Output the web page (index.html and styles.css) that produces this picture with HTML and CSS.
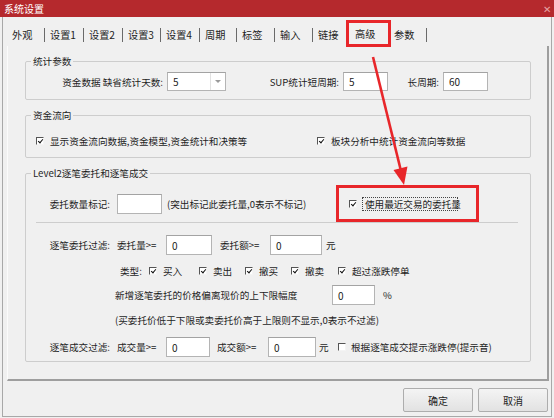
FILE: index.html
```html
<!DOCTYPE html>
<html lang="zh-CN">
<head>
<meta charset="utf-8">
<title>系统设置</title>
<link rel="stylesheet" href="styles.css">
</head>
<body>
<div class="window">
  <div class="titlebar"><span class="title">系统设置</span><span class="close">✕</span></div>

  <div class="tabs">
    <span class="tab tab-w37 first">外观</span>
    <span class="tab tab-w39">设置1</span>
    <span class="tab tab-w39">设置2</span>
    <span class="tab tab-w38">设置3</span>
    <span class="tab tab-w39">设置4</span>
    <span class="tab tab-w37">周期</span>
    <span class="tab tab-w38">标签</span>
    <span class="tab tab-w38">输入</span>
    <span class="tab tab-w38">链接</span>
    <span class="tab tab-w39 active">高级</span>
    <span class="tab tab-w37 last">参数</span>
  </div>

  <div class="panel">
    <fieldset class="group g-stat">
      <legend>统计参数</legend>
      <div class="row row-20">
        <span class="lbl lbl-days">资金数据 缺省统计天数:</span>
        <span class="field combo">5<span class="drop"><span class="tri"></span></span></span>
        <span class="lbl lbl-sup">SUP统计短周期:</span>
        <span class="field w45">5</span>
        <span class="lbl lbl-long">长周期:</span>
        <span class="field w45">60</span>
      </div>
    </fieldset>

    <fieldset class="group g-flow">
      <legend>资金流向</legend>
      <div class="row row-14 pad-cb">
        <span class="opt opt-flow1"><span class="cb on"></span><span class="opt-text">显示资金流向数据,资金模型,资金统计和决策等</span></span>
        <span class="opt"><span class="cb on"></span><span class="opt-text">板块分析中统计资金流向等数据</span></span>
      </div>
    </fieldset>

    <fieldset class="group g-level2">
      <legend>Level2逐笔委托和逐笔成交</legend>
      <div class="row row-20">
        <span class="lbl lbl-row">委托数量标记:</span>
        <span class="field w45 ml7"></span>
        <span class="note">(突出标记此委托量,0表示不标记)</span>
        <span class="opt"><span class="cb on"></span><span class="focus-text">使用最近交易的委托量</span></span>
      </div>
      <div class="sep"></div>
      <div class="row row-20 mt12">
        <span class="lbl lbl-row">逐笔委托过滤:</span>
        <span class="lbl lbl-vol ml7">委托量>=</span>
        <span class="field w46">0</span>
        <span class="lbl lbl-amt ml8">委托额>=</span>
        <span class="field w52">0</span>
        <span class="unit ml4">元</span>
      </div>
      <div class="row row-14 mt9 pad-type">
        <span class="lbl lbl-type">类型:</span>
        <span class="opt w50"><span class="cb on"></span><span class="opt-text">买入</span></span>
        <span class="opt w46"><span class="cb on"></span><span class="opt-text">卖出</span></span>
        <span class="opt w46"><span class="cb on"></span><span class="opt-text">撤买</span></span>
        <span class="opt w47"><span class="cb on"></span><span class="opt-text">撤卖</span></span>
        <span class="opt"><span class="cb on"></span><span class="opt-text">超过涨跌停单</span></span>
      </div>
      <div class="row row-20 mt7 pad-text">
        <span class="lbl lbl-range">新增逐笔委托的价格偏离现价的上下限幅度</span>
        <span class="field w43">0</span>
        <span class="unit ml8">%</span>
      </div>
      <div class="row row-14 mt8 pad-text">
        <span class="lbl">(买委托价低于下限或卖委托价高于上限则不显示,0表示不过滤)</span>
      </div>
      <div class="row row-20 mt10">
        <span class="lbl lbl-row">逐笔成交过滤:</span>
        <span class="lbl lbl-vol ml7">成交量>=</span>
        <span class="field w44">0</span>
        <span class="lbl lbl-amt2 ml7">成交额>=</span>
        <span class="field w48">0</span>
        <span class="unit unit-yuan ml3">元</span>
        <span class="opt"><span class="cb"></span><span class="opt-text">根据逐笔成交提示涨跌停(提示音)</span></span>
      </div>
    </fieldset>
  </div>

  <div class="footer">
    <button class="btn">确定</button>
    <button class="btn">取消</button>
  </div>

  <div class="frame"></div>
  <div class="mark mark-tab"></div>
  <div class="mark mark-opt"></div>
  <svg class="arrow" width="554" height="418" viewBox="0 0 554 418">
    <line x1="373" y1="57" x2="400.5" y2="169" stroke="#e8262a" stroke-width="2.6"/>
    <polygon points="404,185 407.5,166.5 393.5,170" fill="#e8262a"/>
  </svg>
</div>
</body>
</html>
```

FILE: styles.css
```css
* { box-sizing: border-box; }

body {
  margin: 0;
  background: #f0f0f0;
}

.window {
  position: relative;
  width: 554px;
  height: 418px;
  overflow: hidden;
  background: #f0f0f0;
  color: #1e1e1e;
  font-family: "Noto Sans CJK SC", "Microsoft YaHei", "Noto Sans", sans-serif;
  font-size: 9.6px;
}

/* title bar */
.titlebar {
  height: 17px;
  background: #b5292d;
  color: #fff;
  display: flex;
  align-items: center;
  justify-content: space-between;
  padding: 0 3px 0 4px;
}
.title { font-size: 10px; line-height: 17px; }
.close { font-size: 10px; color: #e6a3a4; line-height: 17px; }

/* tabs */
.tabs {
  display: flex;
  margin-top: 11px;
  padding-left: 7px;
  height: 14px;
}
.tab {
  height: 14px;
  line-height: 14px;
  font-size: 10.2px;
  padding-left: 5px;
  border-left: 1px solid #6a6a6a;
  white-space: nowrap;
}
.tab.first { border-left: none; }
.tab.active { border-left: none; line-height: 12px; }
.tab.last { border-left: none; border-right: 1px solid #6a6a6a; padding-left: 5px; }
.tab-w37 { width: 37px; }
.tab-w38 { width: 38px; }
.tab-w39 { width: 39px; }
.tab.last.tab-w37 { width: 38px; }

/* tab page */
.panel {
  margin: 4px 0 0 7px;
  width: 542px;
  padding: 9px 0 17px 17px;
  border-left: 1px solid #fbfbfb;
  border-right: 2px solid #9e9e9e;
  border-bottom: 2px solid #9e9e9e;
}

.group {
  margin: 0;
  width: 506px;
  min-inline-size: 0;
  border: 1px solid #cdcdcd;
  border-radius: 2px;
  padding: 0;
}
.group legend {
  margin-left: 5px;
  padding: 0 2px;
  line-height: 12px;
  height: 12px;
  font-size: 9.6px;
}
.g-stat { padding: 5px 0 8px 0; }
.g-flow { margin-top: 9px; padding: 13px 0 9px 0; }
.g-level2 { margin-top: 9px; padding: 15px 0 4px 0; }

.row {
  display: flex;
  align-items: center;
  white-space: nowrap;
}
.row-20 { height: 20px; }
.row-14 { height: 14px; }
.g-stat .row-20 { height: 19px; }

.lbl { line-height: 14px; }
.lbl-days { width: 137px; text-align: right; margin-right: 4px; }
.lbl-sup { width: 113px; text-align: right; margin-right: 4px; }
.lbl-long { width: 51px; text-align: right; margin-right: 4px; }
.lbl-row { width: 84px; text-align: right; }
.lbl-vol { width: 49px; }
.lbl-amt { width: 50px; }
.lbl-amt2 { width: 51px; }
.lbl-type { width: 29px; }
.lbl-range { width: 217px; }

.pad-cb { padding-left: 10px; }
.pad-type { padding-left: 94px; }
.pad-text { padding-left: 89px; }

.ml3 { margin-left: 3px; }
.ml4 { margin-left: 4px; }
.ml7 { margin-left: 7px; }
.ml8 { margin-left: 8px; }
.mt7 { margin-top: 7px; }
.mt8 { margin-top: 8px; }
.mt9 { margin-top: 9px; }
.mt10 { margin-top: 10px; }
.mt12 { margin-top: 12px; }

/* text fields */
.field {
  display: flex;
  align-items: center;
  height: 100%;
  padding-left: 5px;
  background: #fff;
  border: 1px solid #b4b4b4;
  border-top-color: #a3a3a3;
  font-size: 10px;
  color: #1a1a1a;
}
.w43 { width: 43px; }
.w44 { width: 44px; }
.w45 { width: 45px; }
.w46 { width: 46px; }
.w47 { width: 47px; }
.w48 { width: 48px; }
.w50 { width: 50px; }
.w52 { width: 52px; }

.combo {
  width: 59px;
  position: relative;
  justify-content: space-between;
  padding-right: 0;
}
.drop {
  width: 15px;
  height: 100%;
  border-left: 1px solid #e2e2e2;
  display: flex;
  align-items: center;
  justify-content: center;
}
.tri {
  width: 0;
  height: 0;
  border-left: 3px solid transparent;
  border-right: 3px solid transparent;
  border-top: 3px solid #9a9a9a;
}

.note { width: 182px; margin-left: 5px; line-height: 14px; }
.unit { line-height: 14px; }
.unit-yuan { width: 10px; margin-right: 9px; }

/* checkboxes */
.opt {
  display: flex;
  align-items: center;
  line-height: 14px;
}
.opt-flow1 { width: 281px; }
.cb {
  position: relative;
  flex: none;
  width: 8px;
  height: 8px;
  background: #fff;
  border-top: 1px solid #555;
  border-left: 1px solid #555;
  border-right: 1px solid #f4f4f4;
  border-bottom: 1px solid #f4f4f4;
  margin-right: 6px;
}
.cb.on::after {
  content: "";
  position: absolute;
  left: 2px;
  top: 0px;
  width: 2px;
  height: 4px;
  border-right: 1.4px solid #111;
  border-bottom: 1.4px solid #111;
  transform: rotate(40deg);
}
.g-level2 .row-20 .opt .cb { margin-right: 5px; }
.unit-yuan + .opt .cb { margin-right: 7px; }
.focus-text {
  border: 1px dotted #444;
  padding: 0 2px;
  line-height: 12px;
  width: 96px;
}

.sep {
  margin: 8px 0 0 10px;
  width: 482px;
  height: 1px;
  background: #cdcdcd;
}

/* buttons */
.footer {
  display: flex;
  justify-content: flex-end;
  gap: 5px;
  margin-top: 7px;
  padding-right: 6px;
}
.btn {
  width: 70px;
  height: 24px;
  margin: 0;
  padding: 0;
  border: 1px solid #adadad;
  border-radius: 2px;
  background: linear-gradient(#f4f4f4, #e2e2e2);
  font-family: inherit;
  font-size: 10px;
  color: #1e1e1e;
}

/* decorations on top */
.frame {
  position: absolute;
  left: 2px;
  top: 17px;
  right: 2px;
  bottom: 1px;
  border: 1px solid #a8a8a8;
  border-top: none;
  pointer-events: none;
}
.mark {
  position: absolute;
  border: 3px solid #e8262a;
  pointer-events: none;
}
.mark-tab { left: 346px; top: 20px; width: 45px; height: 27px; }
.mark-opt { left: 336px; top: 185px; width: 143px; height: 37px; }
.arrow {
  position: absolute;
  left: 0;
  top: 0;
  pointer-events: none;
}
```
